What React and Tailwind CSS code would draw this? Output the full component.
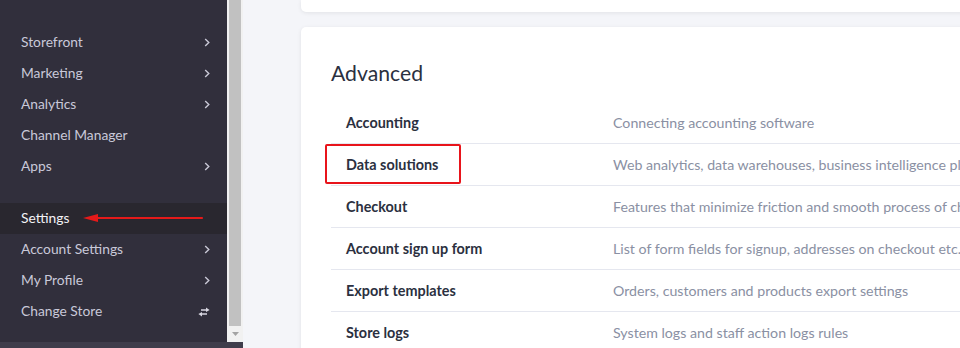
import React from "react";

const font = { fontFamily: '"Source Sans Pro", Lato, "Liberation Sans", sans-serif' };

function Chevron() {
  return (
    <svg width="6" height="9" viewBox="0 0 6 9" className="shrink-0">
      <polyline points="1.2,1 4.8,4.5 1.2,8" fill="none" stroke="#c9c8d6" strokeWidth="1.4" />
    </svg>
  );
}

function Exchange() {
  return (
    <svg width="12" height="10" viewBox="0 0 12 10" className="shrink-0">
      <path d="M3 3 H10" stroke="#d8d7e2" strokeWidth="1.5" fill="none" />
      <path d="M8 0.4 L11.6 3 L8 5 Z" fill="#d8d7e2" />
      <path d="M2 7 H9" stroke="#d8d7e2" strokeWidth="1.5" fill="none" />
      <path d="M4 5 L0.4 7 L4 9.6 Z" fill="#d8d7e2" />
    </svg>
  );
}

function NavItem({ label, icon, active, children }) {
  return (
    <div
      className={
        "relative flex h-[31px] items-center justify-between pl-[21px] pr-[17px] text-[13.8px] " +
        (active ? "bg-[#29272f] text-[#f2f2f6]" : "text-[#c9c9d9]")
      }
    >
      <span>{label}</span>
      {icon === "chev" && <Chevron />}
      {icon === "swap" && <Exchange />}
      {children}
    </div>
  );
}

const rows = [
  ["Accounting", "Connecting accounting software"],
  ["Data solutions", "Web analytics, data warehouses, business intelligence platforms and more"],
  ["Checkout", "Features that minimize friction and smooth process of checkout"],
  ["Account sign up form", "List of form fields for signup, addresses on checkout etc."],
  ["Export templates", "Orders, customers and products export settings"],
  ["Store logs", "System logs and staff action logs rules"],
];

export default function App() {
  return (
    <div className="flex h-[348px] w-[960px] overflow-hidden bg-[#f4f5f9]" style={font}>
      {/* Sidebar */}
      <div className="flex w-[243px] shrink-0 flex-col">
        <div className="flex h-[342px] shrink-0">
          <div className="w-[227px] bg-[#312f3c] pt-[27px]">
            <NavItem label="Storefront" icon="chev" />
            <NavItem label="Marketing" icon="chev" />
            <NavItem label="Analytics" icon="chev" />
            <NavItem label="Channel Manager" />
            <NavItem label="Apps" icon="chev" />
            <div className="h-[21px]" />
            <NavItem label="Settings" active>
              <svg
                width="122"
                height="10"
                viewBox="0 0 122 10"
                className="absolute left-[82px] top-[10px]"
              >
                <path d="M12 5 H120" stroke="#e51a1a" strokeWidth="2.2" strokeLinecap="round" />
                <path d="M1 5 L16 1 L16 9 Z" fill="#e51a1a" />
              </svg>
            </NavItem>
            <NavItem label="Account Settings" icon="chev" />
            <NavItem label="My Profile" icon="chev" />
            <NavItem label="Change Store" icon="swap" />
          </div>
          <div className="flex w-[16px] flex-col bg-[#f1f1f1] pl-[2px] pr-[2px]">
            <div className="flex-1 bg-[#c1c1c1]" />
            <div className="flex h-[16px] items-center justify-center">
              <svg width="7" height="4" viewBox="0 0 7 4">
                <path d="M0 0 H7 L3.5 4 Z" fill="#a3a3a3" />
              </svg>
            </div>
          </div>
        </div>
        <div className="h-[6px] shrink-0 bg-[#3f3d4b]" />
      </div>

      {/* Main */}
      <div className="flex flex-col pl-[58px]">
        <div className="h-[12px] w-[700px] shrink-0 rounded-b-[5px] bg-white shadow-[0_1px_4px_rgba(0,0,0,0.08)]" />
        <div className="mt-[15px] w-[700px] shrink-0 rounded-[5px] bg-white pl-[30px] pt-[30px] shadow-[0_1px_4px_rgba(0,0,0,0.08)]">
          <h2 className="text-[21.2px] leading-[32px] text-[#2b3040]">Advanced</h2>
          <div className="mt-[13px]">
            {rows.map(([label, desc], i) => (
              <div
                key={label}
                className="relative flex h-[42px] items-center border-b border-[#e5e7ef] whitespace-nowrap"
              >
                <div className="w-[282px] shrink-0 pl-[15px] text-[14.4px] font-bold text-[#2b3040]">
                  {label}
                </div>
                <div className="text-[14.2px] text-[#8a90a3]">{desc}</div>
                {i === 1 && (
                  <div className="absolute left-[-6px] top-0 h-[40px] w-[136px] rounded-[2px] border-2 border-[#e8141b]" />
                )}
              </div>
            ))}
          </div>
        </div>
      </div>
    </div>
  );
}
